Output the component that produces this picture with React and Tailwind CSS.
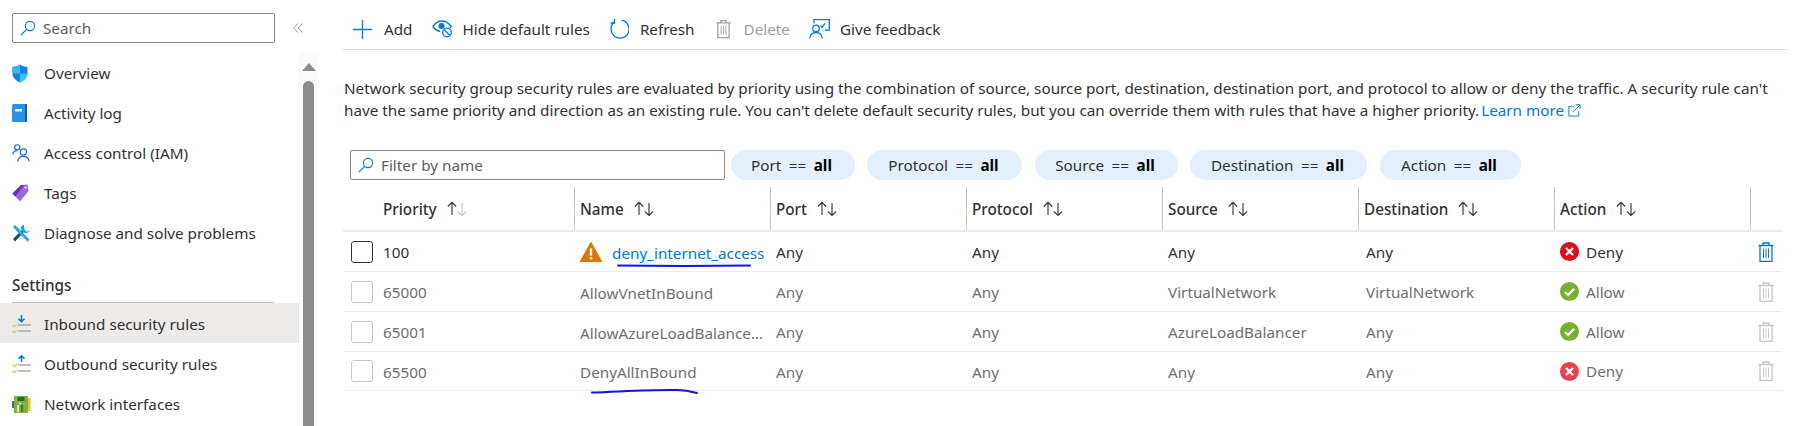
import React from 'react';

const SearchIcon = ({ className }) => (
  <svg viewBox="0 0 16 16" className={className} fill="none" stroke="#0078d4" strokeWidth="1.100">
    <circle cx="10" cy="6" r="4.600" />
    <path d="M6.600 9.400 1 15" />
  </svg>
);

const ShieldIcon = () => (
  <svg viewBox="0 0 16 19" className="w-[16px] h-[19px]">
    <path d="M8 .5c2.200 1.500 4.600 2.300 7.500 2.300v6.700c0 4-3 6.900-7.500 9-4.500-2.100-7.500-5-7.500-9V2.800C3.400 2.800 5.800 2 8 .5z" fill="#1484dc" />
    <path d="M8 .5v9H.5V2.800C3.400 2.800 5.800 2 8 .5z" fill="#37b9ee" />
    <path d="M8 9.500h7.500c0 4-3 6.900-7.500 9z" fill="#37c4f4" />
  </svg>
);

const BookIcon = () => (
  <svg viewBox="0 0 15 18" className="w-[15px] h-[18px]">
    <rect x="0" y="0" width="15" height="18" rx="1.500" fill="#2a92e2" />
    <rect x="13" y="0" width="2" height="18" fill="#0f5fa8" />
    <rect x="3" y="5" width="7" height="2.500" fill="#e8f4fc" />
  </svg>
);

const PeopleIcon = () => (
  <svg viewBox="0 0 20 19" className="w-[19px] h-[18px]" fill="none" stroke="#1a6fd6" strokeWidth="1.300">
    <circle cx="5.500" cy="3.500" r="2.700" />
    <path d="M.6 11c.6-2.500 2.400-4 4.900-4" />
    <circle cx="12" cy="8.500" r="3.300" />
    <path d="M6 18.500c.3-3.300 2.800-5.500 6-5.500s5.700 2.200 6 5.500" />
  </svg>
);

const TagIcon = () => (
  <svg viewBox="0 0 17 18" className="w-[17px] h-[18px]">
    <path d="M.5 9.500 9 1 15.500.5 16.500 7 8 17.500z" fill="#9a6bd8" />
    <path d="M.5 9.500 9 1l3.500.3L3 12.500z" fill="#6c2fb5" />
    <circle cx="13.500" cy="3.500" r="1" fill="#fff" />
  </svg>
);

const WrenchIcon = () => (
  <svg viewBox="0 0 18 18" className="w-[18px] h-[18px]">
    <path d="M1 15 10 6l2 2-9 9.500z" fill="#0f4770" />
    <path d="M12 .8C9.600 1 8.500 3.100 9 5.200l4 4c2.300.5 4.300-1 4.500-3.400L15 8l-2.600-2.400z" fill="#22a0d8" />
    <path d="M1 3 3 1l5 4.800 9.500 9.700-2 2-9.800-9.200z" fill="#2aa8e0" />
  </svg>
);

const RulesIcon = ({ dir }) => (
  <svg viewBox="0 0 20 19" className="w-[20px] h-[19px]" fill="none">
    <path d="M6 10h13M6 16h13" stroke="#adadad" strokeWidth="1.700" />
    <path d="M.5 10l1.700 1.700L5 8.800M.5 16l1.700 1.700L5 14.800" stroke="#bcd63e" strokeWidth="1.100" />
    {dir === 'in'
      ? <path d="M9.500 0v6.500M6.500 3.800l3 3 3-3" stroke="#0078d4" strokeWidth="1.500" />
      : <path d="M9.500 7V.8M6.500 3.800l3-3 3 3" stroke="#0078d4" strokeWidth="1.500" />}
  </svg>
);

const NicIcon = () => (
  <svg viewBox="0 0 19 17" className="w-[19px] h-[17px]">
    <rect x="0" y="5" width="2" height="7" fill="#666" />
    <rect x="2" y="0" width="14" height="17" fill="#7cb342" />
    <rect x="16" y="2" width="2.500" height="13" fill="#f2c230" />
    <rect x="5.500" y="1" width="7" height="4" fill="#2e6b1f" />
    <rect x="5" y="9" width="2" height="7" fill="#dcedc8" />
    <rect x="9" y="9" width="2" height="7" fill="#3f7d2a" />
    <circle cx="8" cy="7.500" r="1" fill="#dcedc8" />
  </svg>
);

const EyeOffIcon = () => (
  <svg viewBox="0 0 21 18" className="w-[21px] h-[18px]" fill="none" stroke="#0078d4" strokeWidth="1.300">
    <path d="M.7 6.500C3.500 2.800 6.800 1 10 1s6.500 1.800 9.300 5.500c-.4.600-.9 1.100-1.400 1.600" />
    <path d="M.7 6.500c2.200 2.800 4.800 4.500 7.500 5" />
    <circle cx="9.500" cy="6" r="2.400" fill="#0078d4" />
    <circle cx="15" cy="12.500" r="4.300" />
    <path d="M12 9.500l6 6" />
  </svg>
);

const RefreshIcon = () => (
  <svg viewBox="0 0 20 20" className="w-[20px] h-[20px]" fill="none" stroke="#0078d4" strokeWidth="1.300">
    <path d="M12.500 1.200A9 9 0 1 1 5.500 3" />
    <path d="M5.500 0v4H1.500" />
  </svg>
);

const TrashIcon = ({ color, className }) => (
  <svg viewBox="0 0 16 20" className={className} fill="none" stroke={color} strokeWidth="1.300">
    <path d="M.5 3.500h15M5 3.500V1h6v2.500" />
    <path d="M2 3.500V19.300h12V3.500" />
    <path d="M5.500 6.500v9.500M8 6.500v9.500M10.500 6.500v9.500" strokeWidth="1" />
  </svg>
);

const FeedbackIcon = () => (
  <svg viewBox="0 0 21 20" className="w-[21px] h-[20px]" fill="none" stroke="#0078d4" strokeWidth="1.300">
    <path d="M5 4.500V.7h15.300v10.500h-4.500" />
    <circle cx="7" cy="9.500" r="3.300" />
    <path d="M.8 19.500c.2-3.500 2.600-6 6.200-6s6 2.500 6.200 6" />
    <path d="M11.500 6.500l1.500 1.800L16 4.500" />
  </svg>
);

const ExternalIcon = () => (
  <svg viewBox="0 0 14 14" className="w-[13px] h-[13px] inline-block ml-[4px] align-[-1px]" fill="none" stroke="#0078d4" strokeWidth="1">
    <path d="M6 2.500H1v10.500h10.500V8" />
    <path d="M5.500 8.500 13 1M8.500 .8H13v4.500" />
  </svg>
);

const SortArrows = ({ muted }) => (
  <svg viewBox="0 0 22 16" className="w-[22px] h-[16px] ml-[9px]" fill="none" strokeWidth="1.100">
    <path d="M6 14V1.500M1.800 5.500 6 1.300l4.200 4.200" stroke="#323130" />
    <path d="M16 2v12.500M11.800 10.300 16 14.500l4.200-4.200" stroke={muted ? '#c8c6c4' : '#323130'} />
  </svg>
);

const WarningIcon = () => (
  <svg viewBox="0 0 22 20" className="w-[22px] h-[20px]">
    <path d="M11 .5 21.800 19.500H.2z" fill="#db7500" stroke="#db7500" strokeLinejoin="round" />
    <rect x="9.800" y="6.500" width="2.400" height="7" fill="#fff" />
    <rect x="9.800" y="15" width="2.400" height="2.400" fill="#fff" />
  </svg>
);

const DenyIcon = ({ faded }) => (
  <svg viewBox="0 0 19 19" className="w-[19px] h-[19px]">
    <circle cx="9.500" cy="9.500" r="9.500" fill={faded ? '#ee3f4f' : '#e00b1c'} />
    <path d="M6 6l7 7M13 6l-7 7" stroke="#fff" strokeWidth="2.400" />
  </svg>
);

const AllowIcon = () => (
  <svg viewBox="0 0 19 19" className="w-[19px] h-[19px]">
    <circle cx="9.500" cy="9.500" r="9.500" fill="#7ab030" />
    <path d="M5 10l3.200 3L14 6.700" stroke="#fff" strokeWidth="2.200" fill="none" />
  </svg>
);

const navTop = [
  { label: 'Overview', icon: <ShieldIcon /> },
  { label: 'Activity log', icon: <BookIcon /> },
  { label: 'Access control (IAM)', icon: <PeopleIcon /> },
  { label: 'Tags', icon: <TagIcon /> },
  { label: 'Diagnose and solve problems', icon: <WrenchIcon /> },
];

const navSettings = [
  { label: 'Inbound security rules', icon: <RulesIcon dir="in" />, active: true },
  { label: 'Outbound security rules', icon: <RulesIcon dir="out" /> },
  { label: 'Network interfaces', icon: <NicIcon /> },
];

const filters = [
  { name: 'Port', w: 'w-[124px]' },
  { name: 'Protocol', w: 'w-[155px]' },
  { name: 'Source', w: 'w-[143px]' },
  { name: 'Destination', w: 'w-[177px]' },
  { name: 'Action', w: 'w-[141px]' },
];

const columns = ['Name', 'Port', 'Protocol', 'Source', 'Destination', 'Action'];

const rules = [
  { priority: '100', name: 'deny_internet_access', port: 'Any', protocol: 'Any', source: 'Any', dest: 'Any', action: 'Deny', custom: true },
  { priority: '65000', name: 'AllowVnetInBound', port: 'Any', protocol: 'Any', source: 'VirtualNetwork', dest: 'VirtualNetwork', action: 'Allow' },
  { priority: '65001', name: 'AllowAzureLoadBalance…', port: 'Any', protocol: 'Any', source: 'AzureLoadBalancer', dest: 'Any', action: 'Allow' },
  { priority: '65500', name: 'DenyAllInBound', port: 'Any', protocol: 'Any', source: 'Any', dest: 'Any', action: 'Deny' },
];

const gridCols = 'grid grid-cols-[231px_196px_196px_196px_196px_196px_196px_31px]';

const NavItem = ({ item, low }) => (
  <div className={`h-10 flex items-center ${item.active ? 'bg-[#edebe9]' : ''}`}>
    <div className={`w-[44px] pl-[12px] flex items-center shrink-0 ${low ? 'pt-[2px]' : ''}`}>{item.icon}</div>
    <span className={low ? 'pt-[3px]' : 'pt-[1px]'}>{item.label}</span>
  </div>
);

const ToolButton = ({ icon, label, disabled, className }) => (
  <div className={`flex items-center ${className}`}>
    {icon}
    <span className={disabled ? 'text-[#a19f9d]' : 'text-[#323130]'}>{label}</span>
  </div>
);

export default function App() {
  return (
    <div
      className="relative w-[1801px] h-[426px] overflow-hidden bg-white flex text-[15.25px] text-[#323130]"
      style={{ fontFamily: '"Noto Sans", sans-serif' }}
    >
      {/* Sidebar */}
      <aside className="w-[318px] shrink-0 flex flex-col">
        <div className="h-[53px] pl-[12px] pt-[13px]">
          <div className="flex items-center">
            <div className="w-[263px] h-[30px] border border-[#8a8886] rounded-[2px] flex items-center pl-[7px]">
              <SearchIcon className="w-[16px] h-[16px]" />
              <span className="ml-[7px] text-[#605e5c]">Search</span>
            </div>
            <svg viewBox="0 0 10 10" className="w-[10px] h-[10px] ml-[18px]" fill="none" stroke="#8a8886" strokeWidth="0.900">
              <path d="M5 .5.7 5 5 9.500M9.500 .5 5.200 5l4.300 4.500" />
            </svg>
          </div>
        </div>
        <div className="flex flex-1 min-h-0">
          <nav className="w-[299px]">
            {navTop.map((item) => <NavItem key={item.label} item={item} />)}
            <div className="mt-[14px] mx-[12px] w-[262px] h-[36px] pt-[7px] border-b border-[#c8c6c4] font-medium">Settings</div>
            {navSettings.map((item) => <NavItem key={item.label} item={item} low />)}
          </nav>
          <div className="w-[19px] bg-[#fbfbfb] flex flex-col items-center">
            <div className="mt-[10px] w-0 h-0 border-x-[7px] border-x-transparent border-b-[8px] border-b-[#8c8c8c]" />
            <div className="mt-[10px] w-[11px] flex-1 rounded-t-[6px] bg-[#8c8c8c]" />
          </div>
        </div>
      </aside>

      {/* Main */}
      <main className="ml-[25px] w-[1445px] shrink-0">
        <div className="h-[50px] border-b border-[#d9d9d9] pt-[9px] flex items-center">
          <ToolButton
            className="ml-[10px] gap-[12px]"
            label="Add"
            icon={
              <svg viewBox="0 0 19 19" className="w-[19px] h-[19px]" fill="none" stroke="#0078d4" strokeWidth="1.300">
                <path d="M9.500 0v19M0 9.500h19" />
              </svg>
            }
          />
          <ToolButton className="ml-[19px] gap-[10px]" label="Hide default rules" icon={<EyeOffIcon />} />
          <ToolButton className="ml-[19px] gap-[11px]" label="Refresh" icon={<RefreshIcon />} />
          <ToolButton className="ml-[21px] gap-[13px]" label="Delete" disabled icon={<TrashIcon color="#a19f9d" className="w-[15px] h-[20px]" />} />
          <ToolButton className="ml-[19px] gap-[10px]" label="Give feedback" icon={<FeedbackIcon />} />
        </div>

        <p className="mt-[27px] ml-[1px] leading-[22px] whitespace-nowrap">
          Network security group security rules are evaluated by priority using the combination of source, source port, destination, destination port, and protocol to allow or deny the traffic. A security rule can't<br />
          have the same priority and direction as an existing rule. You can't delete default security rules, but you can override them with rules that have a higher priority.{' '}
          <span className="text-[#0078d4] ml-[-2px]">Learn more<ExternalIcon /></span>
        </p>

        <div className="mt-[29px] ml-[7px] flex gap-[12.500px]">
          <div className="w-[375px] h-[30px] border border-[#8a8886] rounded-[2px] flex items-center pl-[7px] mr-[-7px]">
            <SearchIcon className="w-[16px] h-[16px]" />
            <span className="ml-[7px] text-[#605e5c]">Filter by name</span>
          </div>
          {filters.map((f) => (
            <div key={f.name} className={`${f.w} h-[30px] rounded-full bg-[#e3f0fb] flex items-center justify-center pr-[2px] [word-spacing:3.5px]`}>
              <span>{f.name} == <b className="font-bold text-black">all</b></span>
            </div>
          ))}
        </div>

        {/* Rules table */}
        <div className="mt-[7px] w-[1439px]">
          <div className={`${gridCols} h-[45px] border-b-2 border-[#edebe9] font-medium`}>
            <div className="pl-[40px] flex items-center">
              <span className="pt-[2px]">Priority</span><SortArrows muted />
            </div>
            {columns.map((c) => (
              <div key={c} className="border-l border-[#c8c6c4] pl-[5px] flex items-center">
                <span className="pt-[2px]">{c}</span><SortArrows />
              </div>
            ))}
            <div className="border-l border-[#c8c6c4]" />
          </div>
          {rules.map((r, i) => (
            <div
              key={r.priority}
              className={`${gridCols} ${i === 3 ? 'h-[39px]' : 'h-10'} border-b border-[#edebe9] items-center ${r.custom ? 'text-[#323130]' : 'text-[#706e6c]'}`}
            >
              <div className="flex items-center pl-[8px]">
                <div className={`w-[22px] h-[22px] rounded-[3px] border ${r.custom ? 'border-[#323130]' : 'border-[#c8c6c4]'}`} />
                <span className="ml-[10px] pt-[2px]">{r.priority}</span>
              </div>
              <div className="pl-[6px] flex items-center">
                {r.custom && <div className="mr-[10px] shrink-0"><WarningIcon /></div>}
                <span className={`pt-[3px] whitespace-nowrap ${r.custom ? 'text-[#0078d4]' : ''}`}>{r.name}</span>
              </div>
              <div className="pl-[6px] pt-[2px]">{r.port}</div>
              <div className="pl-[6px] pt-[2px]">{r.protocol}</div>
              <div className="pl-[6px] pt-[2px]">{r.source}</div>
              <div className="pl-[8px] pt-[2px]">{r.dest}</div>
              <div className="pl-[6px] flex items-center gap-[7px]">
                {r.action === 'Deny' ? <DenyIcon faded={!r.custom} /> : <AllowIcon />}
                <span className="pt-[1px]">{r.action}</span>
              </div>
              <div className="flex justify-center">
                <TrashIcon color={r.custom ? '#0078d4' : '#c8c6c4'} className="w-[16px] h-[20px]" />
              </div>
            </div>
          ))}
        </div>
      </main>

      {/* Hand-drawn annotations over the table */}
      <svg className="absolute left-0 top-0 w-[1801px] h-[426px] pointer-events-none" viewBox="0 0 1801 426" fill="none" stroke="#1212e6" strokeWidth="2" strokeLinecap="round">
        <path d="M618 265.500c40 .5 90 .5 132 0" />
        <path d="M592 392.500c30-1 60-3 85-2.500 8 .2 14 1.500 20 3" />
      </svg>
    </div>
  );
}
